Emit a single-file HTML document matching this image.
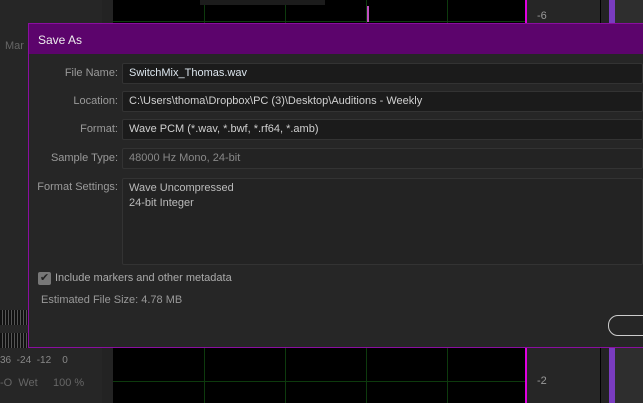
<!DOCTYPE html>
<html><head><style>
body{margin:0;width:643px;height:403px;overflow:hidden;background:#232323;font-family:"Liberation Sans",sans-serif;position:relative}
.a{position:absolute}
.lab{position:absolute;right:525px;color:#9a9a9a;font-size:11px;text-align:right;white-space:nowrap}
.fld{position:absolute;left:122px;right:0;height:21px;background:#1b1b1b;border:1px solid #333;border-radius:2px;box-sizing:border-box;color:#d0d0d0;font-size:11px;line-height:19px;padding-left:6px;white-space:nowrap}
.g{position:absolute;background:#0d3a0d}
</style></head><body>
<div class="a" style="left:0;top:0;width:102px;height:403px;background:#262626"></div>
<div class="a" style="left:113px;top:0;width:412px;height:403px;background:#000"></div>
<div class="g" style="left:113px;top:21px;width:412px;height:1px"></div>
<div class="g" style="left:113px;top:381px;width:412px;height:1px"></div>
<div class="g" style="left:204px;top:0;width:1px;height:403px"></div>
<div class="g" style="left:285px;top:0;width:1px;height:403px"></div>
<div class="g" style="left:366px;top:0;width:1px;height:403px"></div>
<div class="g" style="left:447px;top:0;width:1px;height:403px"></div>
<div class="a" style="left:200px;top:0;width:125px;height:5px;background:#1c1c1c"></div>
<div class="a" style="left:367px;top:6px;width:2px;height:16px;background:#c050c0"></div>
<div class="a" style="left:525px;top:0;width:2px;height:403px;background:#e000e0"></div>
<div class="a" style="left:527px;top:0;width:73px;height:403px;background:#262626"></div>
<div class="a" style="left:537px;top:10px;color:#999;font-size:11px">-6</div>
<div class="a" style="left:537px;top:375px;color:#999;font-size:11px">-2</div>
<div class="a" style="left:600px;top:0;width:1px;height:403px;background:#000"></div>
<div class="a" style="left:609px;top:0;width:6px;height:403px;background:#7a3cc0"></div>
<div class="a" style="left:615px;top:0;width:28px;height:403px;background:#2e2e2e"></div>
<div class="a" style="left:0;top:355px;color:#888;font-size:10px">36 &nbsp;-24 &nbsp;-12 &nbsp;&nbsp;&nbsp;0</div>
<div class="a" style="left:0;top:377px;color:#666;font-size:11px">-O &nbsp;Wet &nbsp;&nbsp;&nbsp;&nbsp;100 %</div>
<div class="a" style="left:0;top:310px;width:28px;height:15px;background:repeating-linear-gradient(90deg,#111 0 2px,#555 2px 3px)"></div>
<div class="a" style="left:0;top:333px;width:28px;height:15px;background:repeating-linear-gradient(90deg,#111 0 2px,#555 2px 3px)"></div>
<div class="a" style="left:5px;top:40px;color:#666;font-size:11px">Mar</div>

<div class="a" style="left:28px;top:23px;width:615px;height:325px;background:#262626;border:1px solid #8a0ea0;border-right:none;box-sizing:border-box">
 <div class="a" style="left:0;top:0;right:0;height:30px;background:#5c046c"></div>
 <div class="a" style="left:9px;top:9px;color:#eee;font-size:12px">Save As</div>
</div>
<div class="lab" style="top:67px">File Name:</div>
<div class="fld" style="top:63px;color:#dce6ee">SwitchMix_Thomas.wav</div>
<div class="lab" style="top:95px">Location:</div>
<div class="fld" style="top:91px">C:\Users\thoma\Dropbox\PC (3)\Desktop\Auditions - Weekly</div>
<div class="lab" style="top:123px">Format:</div>
<div class="fld" style="top:119px">Wave PCM (*.wav, *.bwf, *.rf64, *.amb)</div>
<div class="lab" style="top:152px">Sample Type:</div>
<div class="fld" style="top:148px;background:#232323;color:#888">48000 Hz Mono, 24-bit</div>
<div class="lab" style="top:181px">Format Settings:</div>
<div class="fld" style="top:178px;height:87px;background:#232323;line-height:15px;padding-top:2px;color:#bbb">Wave Uncompressed<br>24-bit Integer</div>
<div class="a" style="left:38px;top:272px;width:13px;height:13px;background:#777;border-radius:2px;color:#222;font-size:11px;line-height:13px;text-align:center">✔</div>
<div class="a" style="left:55px;top:272px;color:#aaa;font-size:11px">Include markers and other metadata</div>
<div class="a" style="left:41px;top:294px;color:#999;font-size:11px">Estimated File Size: 4.78 MB</div>
<div class="a" style="left:608px;top:315px;width:60px;height:19px;border:1.5px solid #ccc;border-radius:10px"></div>
</body></html>
